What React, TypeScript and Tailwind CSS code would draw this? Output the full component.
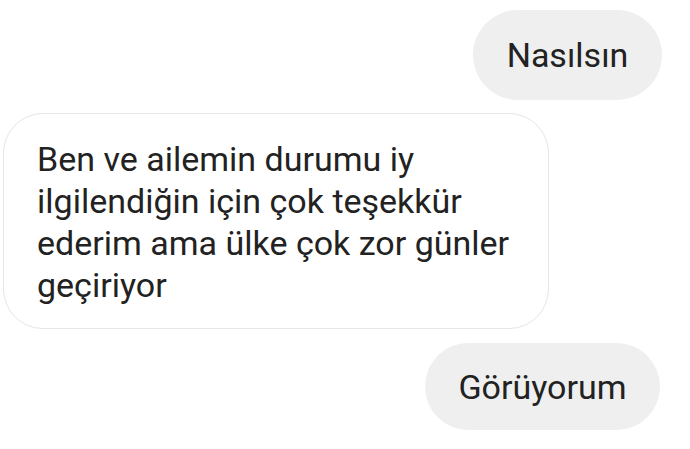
import React from "react";

export default function App() {
  return (
    <div
      className="w-[690px] h-[449px] bg-white overflow-hidden flex flex-col"
      style={{ fontFamily: "Roboto, 'Noto Sans', sans-serif" }}
    >
      <div className="flex justify-end pt-[10px] pr-[28px]">
        <div className="h-[90px] w-[189px] rounded-full bg-[#efefef] text-[#222222] text-[34px] leading-[42px] flex items-center justify-center">
          Nasılsın
        </div>
      </div>
      <div className="flex pl-[3px] mt-[13px]">
        <div className="w-[546px] h-[216px] rounded-[40px] border border-[#e6e6e6] bg-white pl-[33px] pr-[10px] pt-[24px] text-[#222222] text-[34px] leading-[42px] whitespace-nowrap">
          Ben ve ailemin durumu iy
          <br />
          ilgilendiğin için çok teşekkür
          <br />
          ederim ama ülke çok zor günler
          <br />
          geçiriyor
        </div>
      </div>
      <div className="flex justify-end pr-[30px] mt-[14px]">
        <div className="h-[87px] w-[235px] rounded-full bg-[#efefef] text-[#222222] text-[34px] leading-[42px] flex items-center justify-center">
          Görüyorum
        </div>
      </div>
    </div>
  );
}
